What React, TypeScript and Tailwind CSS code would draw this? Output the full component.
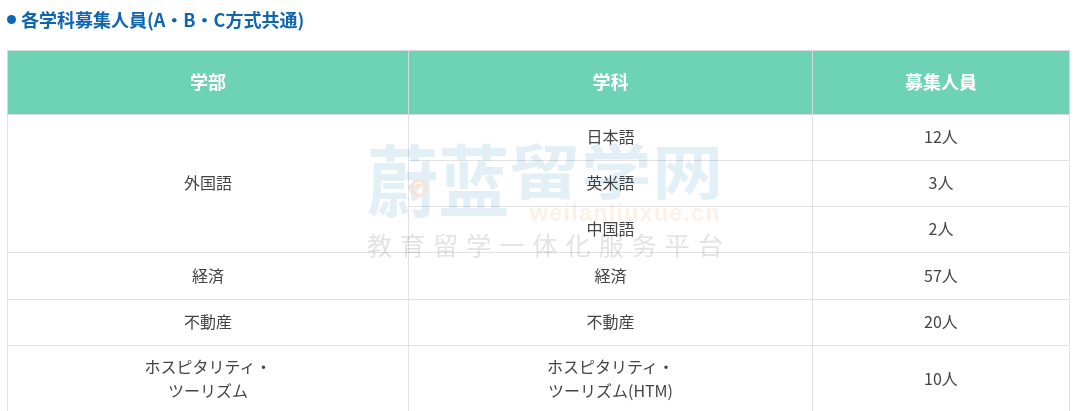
const FONT = "font-['Noto_Sans_CJK_JP','Noto_Sans',sans-serif]";

const cell = "border border-[#e2e2e2] text-center align-middle pb-[3px]";

function Row({ a, b, c }: { a: string; b: string; c: string }) {
  return (
    <tr className="h-[46px]">
      <td className={cell}>{a}</td>
      <td className={cell}>{b}</td>
      <td className={cell}>{c}</td>
    </tr>
  );
}

// faint logo watermark that sits over the table
function Watermark() {
  return (
    <div className="absolute left-[367px] top-[134px] w-[356px] pointer-events-none select-none mix-blend-multiply">
      <div className="flex justify-between text-[71px] leading-[88px] font-bold text-[#e3eff7] h-[88px] origin-top scale-y-110 -translate-y-[6px]">
        <span>蔚</span>
        <span>蓝</span>
        <span className="inline-block origin-[50%_12px] scale-y-[0.76]">留</span>
        <span className="inline-block origin-[50%_12px] scale-y-[0.76]">学</span>
        <span className="inline-block origin-[50%_12px] scale-y-[0.76]">网</span>
      </div>
      <svg className="absolute left-[42px] top-[44px]" width="20" height="20" viewBox="0 0 20 20">
        <circle cx="10" cy="10" r="7.5" fill="none" stroke="#fbe3d2" strokeWidth="3" />
        <path d="M6 8c2-3 5-3 7-1-1 3-3 2-3 5-2 0-4-1-4-4z" fill="#fbe3d2" />
      </svg>
      <div className="absolute left-[163px] top-[68px] font-['Liberation_Sans',sans-serif] font-bold text-[23px] leading-[23px] text-[#fdf0e6] tracking-[1.4px] whitespace-nowrap">
        weilanliuxue.cn
      </div>
      <div className="flex justify-between text-[25px] leading-[30px] text-[#e3e3e3] mt-[7px]">
        {"教育留学一体化服务平台".split("").map((ch, i) => (
          <span key={i}>{ch}</span>
        ))}
      </div>
    </div>
  );
}

export default function App() {
  return (
    <div className={`relative w-[1080px] h-[411px] overflow-hidden bg-white ${FONT}`}>
      <div className="pl-[7px] pr-[11px]">
        <h2 className="h-[50px] pt-[6px] text-[18px] leading-[26px] font-bold text-[#0f65ae] flex items-start">
          <span className="w-[9px] h-[9px] mt-[9px] mr-[5px] rounded-full bg-[#0a68b8]" />
          各学科募集人員(A・B・C方式共通)
        </h2>
        <table className="w-[1062px] table-fixed border-collapse text-[16px] leading-[24px] text-[#444]">
          <colgroup>
            <col className="w-[401px]" />
            <col className="w-[404px]" />
            <col className="w-[257px]" />
          </colgroup>
          <thead>
            <tr className="h-[64px] bg-[#6ed2b5] text-white text-[18px] font-bold">
              <th className="border border-[#d5dbd9] text-center align-middle pb-[3px]">学部</th>
              <th className="border border-[#d5dbd9] text-center align-middle pb-[3px]">学科</th>
              <th className="border border-[#d5dbd9] text-center align-middle pb-[3px]">募集人員</th>
            </tr>
          </thead>
          <tbody>
            <tr className="h-[46px]">
              <td rowSpan={3} className={cell}>外国語</td>
              <td className={cell}>日本語</td>
              <td className={cell}>12人</td>
            </tr>
            <tr className="h-[46px]">
              <td className={cell}>英米語</td>
              <td className={cell}>3人</td>
            </tr>
            <tr className="h-[46px]">
              <td className={cell}>中国語</td>
              <td className={cell}>2人</td>
            </tr>
            <tr className="h-[47px]">
              <td className={cell}>経済</td>
              <td className={cell}>経済</td>
              <td className={cell}>57人</td>
            </tr>
            <Row a="不動産" b="不動産" c="20人" />
            <tr className="h-[68px]">
              <td className={cell}>
                ホスピタリティ・
                <br />
                ツーリズム
              </td>
              <td className={cell}>
                ホスピタリティ・
                <br />
                ツーリズム(HTM)
              </td>
              <td className={cell}>10人</td>
            </tr>
          </tbody>
        </table>
      </div>
      <Watermark />
    </div>
  );
}
